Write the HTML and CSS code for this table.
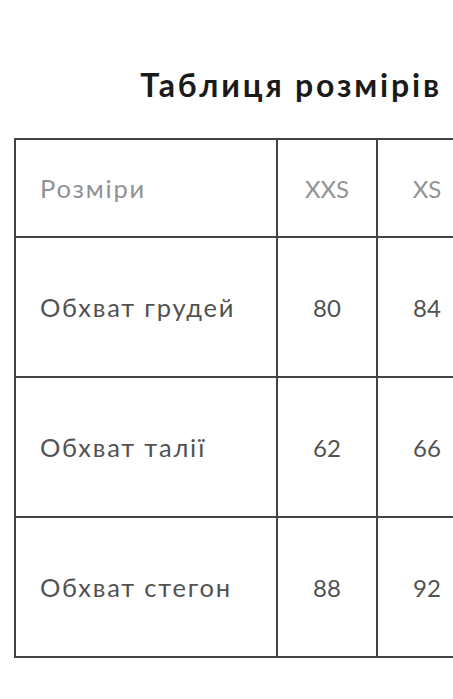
FILE: index.html
```html
<!DOCTYPE html>
<html lang="uk">
<head>
<meta charset="utf-8">
<link rel="stylesheet" href="styles.css">
</head>
<body>
<div class="page">
  <h1 class="title">Таблиця розмірів</h1>
  <div class="table-wrap">
    <table class="sizes">
      <colgroup>
        <col class="c-label">
        <col class="c-val">
        <col class="c-val">
      </colgroup>
      <tr class="head">
        <td class="label">Розміри</td>
        <td class="val">XXS</td>
        <td class="val">XS</td>
      </tr>
      <tr class="row">
        <td class="label">Обхват грудей</td>
        <td class="val">80</td>
        <td class="val">84</td>
      </tr>
      <tr class="row">
        <td class="label">Обхват талії</td>
        <td class="val">62</td>
        <td class="val">66</td>
      </tr>
      <tr class="row">
        <td class="label">Обхват стегон</td>
        <td class="val">88</td>
        <td class="val">92</td>
      </tr>
    </table>
  </div>
</div>
</body>
</html>
```
FILE: styles.css
```css
html, body {
  margin: 0;
  padding: 0;
  background: #ffffff;
  overflow: hidden;
}
.page {
  width: 453px;
  height: 699px;
  overflow: hidden;
  font-family: Lato, "Open Sans", sans-serif;
}
.title {
  margin: 0;
  padding: 66px 11px 0 0;
  text-align: right;
  font-size: 32px;
  line-height: 38px;
  font-weight: 700;
  color: #1a1a1a;
  letter-spacing: 2.85px;
}
.table-wrap {
  padding: 34px 0 0 14px;
}
.sizes {
  border-collapse: collapse;
  table-layout: fixed;
  width: 462px;
}
.c-label { width: 262px; }
.c-val { width: 100px; }
.sizes td {
  border: 2px solid #444444;
  padding: 0;
  vertical-align: middle;
  font-size: 24px;
  color: #525252;
  font-weight: 400;
}
.head td {
  height: 96px;
  color: #929292;
}
.row td {
  height: 138px;
}
.label {
  padding-left: 24px !important;
  text-align: left;
  font-size: 25.5px !important;
  letter-spacing: 1.8px;
}
.val {
  text-align: center;
}
```
